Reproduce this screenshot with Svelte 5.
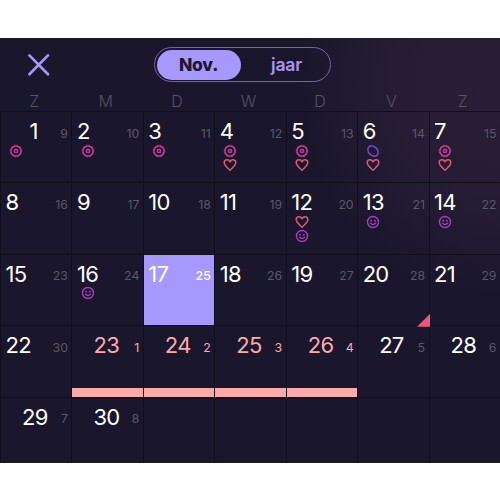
<script lang="ts">
	type Icon = "flower" | "heart" | "smile" | "oval";

	interface Day {
		day: number;
		cycle: number;
		icons?: Icon[];
		shifted?: boolean;
		period?: boolean;
		marker?: boolean;
	}

	const weekdays = ["Z", "M", "D", "W", "D", "V", "Z"];

	const days: Day[] = [
		{ day: 1, cycle: 9, icons: ["flower"], shifted: true },
		{ day: 2, cycle: 10, icons: ["flower"] },
		{ day: 3, cycle: 11, icons: ["flower"] },
		{ day: 4, cycle: 12, icons: ["flower", "heart"] },
		{ day: 5, cycle: 13, icons: ["flower", "heart"] },
		{ day: 6, cycle: 14, icons: ["oval", "heart"] },
		{ day: 7, cycle: 15, icons: ["flower", "heart"] },
		{ day: 8, cycle: 16 },
		{ day: 9, cycle: 17 },
		{ day: 10, cycle: 18 },
		{ day: 11, cycle: 19 },
		{ day: 12, cycle: 20, icons: ["heart", "smile"] },
		{ day: 13, cycle: 21, icons: ["smile"] },
		{ day: 14, cycle: 22, icons: ["smile"] },
		{ day: 15, cycle: 23 },
		{ day: 16, cycle: 24, icons: ["smile"] },
		{ day: 17, cycle: 25 },
		{ day: 18, cycle: 26 },
		{ day: 19, cycle: 27 },
		{ day: 20, cycle: 28, marker: true },
		{ day: 21, cycle: 29 },
		{ day: 22, cycle: 30 },
		{ day: 23, cycle: 1, shifted: true, period: true },
		{ day: 24, cycle: 2, shifted: true, period: true },
		{ day: 25, cycle: 3, shifted: true, period: true },
		{ day: 26, cycle: 4, shifted: true, period: true },
		{ day: 27, cycle: 5, shifted: true },
		{ day: 28, cycle: 6, shifted: true },
		{ day: 29, cycle: 7, shifted: true },
		{ day: 30, cycle: 8, shifted: true },
	];

	const blanks = Array(35 - days.length).fill(0);

	let selected = $state(17);
	let view = $state("month");
</script>

<div class="calendar">
	<header>
		<button class="close" aria-label="Sluiten">
			<svg width="24" height="24" viewBox="0 0 24 24">
				<path d="M2.4 2.4 21 21.2M21 2.4 2.4 21.2" />
			</svg>
		</button>
		<div class="toggle">
			<button class:active={view === "month"} onclick={() => (view = "month")}>Nov.</button>
			<button class:active={view === "year"} onclick={() => (view = "year")}>jaar</button>
		</div>
	</header>

	<div class="weekdays">
		{#each weekdays as weekday}
			<span>{weekday}</span>
		{/each}
	</div>

	<div class="grid">
		{#each days as d}
			<button
				class="cell"
				class:selected={d.day === selected}
				class:shifted={d.shifted}
				class:single={d.day < 10}
				class:period={d.period}
				onclick={() => (selected = d.day)}
			>
				<span class="numbers">
					<span class="day">{d.day}</span>
					<span class="cycle">{d.cycle}</span>
				</span>
				{#if d.icons}
					<span class="icons">
						{#each d.icons as icon}
							<svg class={icon} width="14" height="14" viewBox="0 0 14 14">
								{#if icon === "flower"}
									<circle cx="7" cy="7" r="5.1" />
									<circle class="petals" cx="7" cy="7" r="5.8" />
									<circle cx="7" cy="7" r="1.6" />
								{:else if icon === "heart"}
									<path d="M7 12.2C4.9 10.2 1.2 7.7 1.2 4.6 1.2 1.4 5.4.6 7 3.8 8.6.6 12.8 1.4 12.8 4.6 12.8 7.7 9.1 10.2 7 12.2Z" />
								{:else if icon === "smile"}
									<circle cx="7" cy="7" r="5.5" />
									<path d="M5.1 5.3v.9M8.9 5.3v.9M4.5 8.2Q7 10.6 9.5 8.2" />
								{:else}
									<ellipse cx="7" cy="7" rx="5.8" ry="4.4" transform="rotate(45 7 7)" />
								{/if}
							</svg>
						{/each}
					</span>
				{/if}
				{#if d.marker}
					<span class="marker"></span>
				{/if}
			</button>
		{/each}
		{#each blanks as _}
			<div class="cell"></div>
		{/each}
	</div>
</div>

<style>
	:global(body) {
		background: #fff;
	}

	.calendar {
		box-sizing: border-box;
		width: 500px;
		height: 425px;
		margin-top: 38px;
		overflow: hidden;
		font-family: Inter, "Liberation Sans", sans-serif;
		background:
			radial-gradient(ellipse 190px 210px at 490px 45px, #281e36 0%, #261d34 50%, rgba(38, 29, 52, 0) 100%),
			#1a172c;
	}

	button {
		margin: 0;
		padding: 0;
		border: none;
		background: none;
		font: inherit;
		cursor: pointer;
	}

	header {
		display: flex;
		align-items: center;
		height: 53px;
		padding-left: 27px;
	}

	.close {
		width: 24px;
		height: 24px;
		margin-right: 103px;
	}

	.close svg {
		display: block;
		fill: none;
		stroke: #a596f8;
		stroke-width: 2.7;
		stroke-linecap: round;
	}

	.toggle {
		box-sizing: border-box;
		display: flex;
		width: 177px;
		height: 35px;
		padding: 1.5px;
		border: 1px solid #7d61ab;
		border-radius: 18px;
	}

	.toggle button {
		flex: 1;
		padding-left: 4px;
		border-radius: 15px;
		color: #a596f8;
		font-size: 17.5px;
		font-weight: 600;
		letter-spacing: -0.2px;
	}

	.toggle button.active {
		flex: 0 0 84px;
		box-sizing: border-box;
		padding-left: 0;
		color: #1a172c;
		background: #a798ff;
		font-weight: 800;
		letter-spacing: -0.3px;
	}

	.weekdays {
		display: grid;
		grid-template-columns: repeat(7, 1fr);
		height: 20px;
		color: #57535f;
		font-size: 16px;
		font-weight: 300;
		line-height: 20px;
		text-align: center;
	}

	.weekdays span {
		padding-right: 3px;
	}

	.grid {
		display: grid;
		grid-template-columns: repeat(7, 1fr);
		grid-auto-rows: 71.4px;
	}

	.cell {
		position: relative;
		box-sizing: border-box;
		display: flex;
		flex-direction: column;
		min-width: 0;
		border-top: 1px solid #110e1e;
		border-left: 1px solid #110e1e;
		color: #fff;
		text-align: left;
	}

	.numbers {
		display: flex;
		justify-content: space-between;
		width: 100%;
		height: 31.5px;
		box-sizing: border-box;
		padding: 6px 3.5px 0 4.5px;
		line-height: 26px;
	}

	.shifted .numbers {
		padding-left: 21px;
	}

	.shifted.single .numbers {
		padding-left: 28.5px;
	}

	.day {
		font-size: 22px;
		letter-spacing: -0.7px;
	}

	.cycle {
		padding-top: 2.5px;
		color: #5a5766;
		font-size: 12.3px;
	}

	.icons {
		display: flex;
		flex-direction: column;
		padding-left: 8.2px;
	}

	.icons svg {
		display: block;
		fill: none;
		stroke-width: 1.5;
		stroke-linecap: round;
		stroke-linejoin: round;
	}

	.icons .flower {
		stroke: #c43a94;
	}

	.icons .petals {
		stroke-width: 0.9;
		stroke-dasharray: 1.7 1.34;
		stroke-linecap: butt;
	}

	.icons .heart {
		stroke: #dc5878;
	}

	.icons .smile {
		stroke: #a53ec4;
		stroke-width: 1.4;
	}

	.icons .oval {
		stroke: #7d42cf;
	}

	.period .day,
	.period .cycle {
		color: #fcaaac;
	}

	.period::after {
		content: "";
		height: 9px;
		margin-top: auto;
		background: #fdaaaa;
	}

	.selected {
		background: #a798ff;
		background-clip: padding-box;
	}

	.selected .cycle {
		color: #fff;
		font-weight: 500;
	}

	.marker {
		position: absolute;
		right: -1.5px;
		bottom: -1.5px;
		z-index: 1;
		width: 13px;
		height: 13px;
		background: #ef5578;
		clip-path: polygon(100% 0, 100% 100%, 0 100%);
	}
</style>
